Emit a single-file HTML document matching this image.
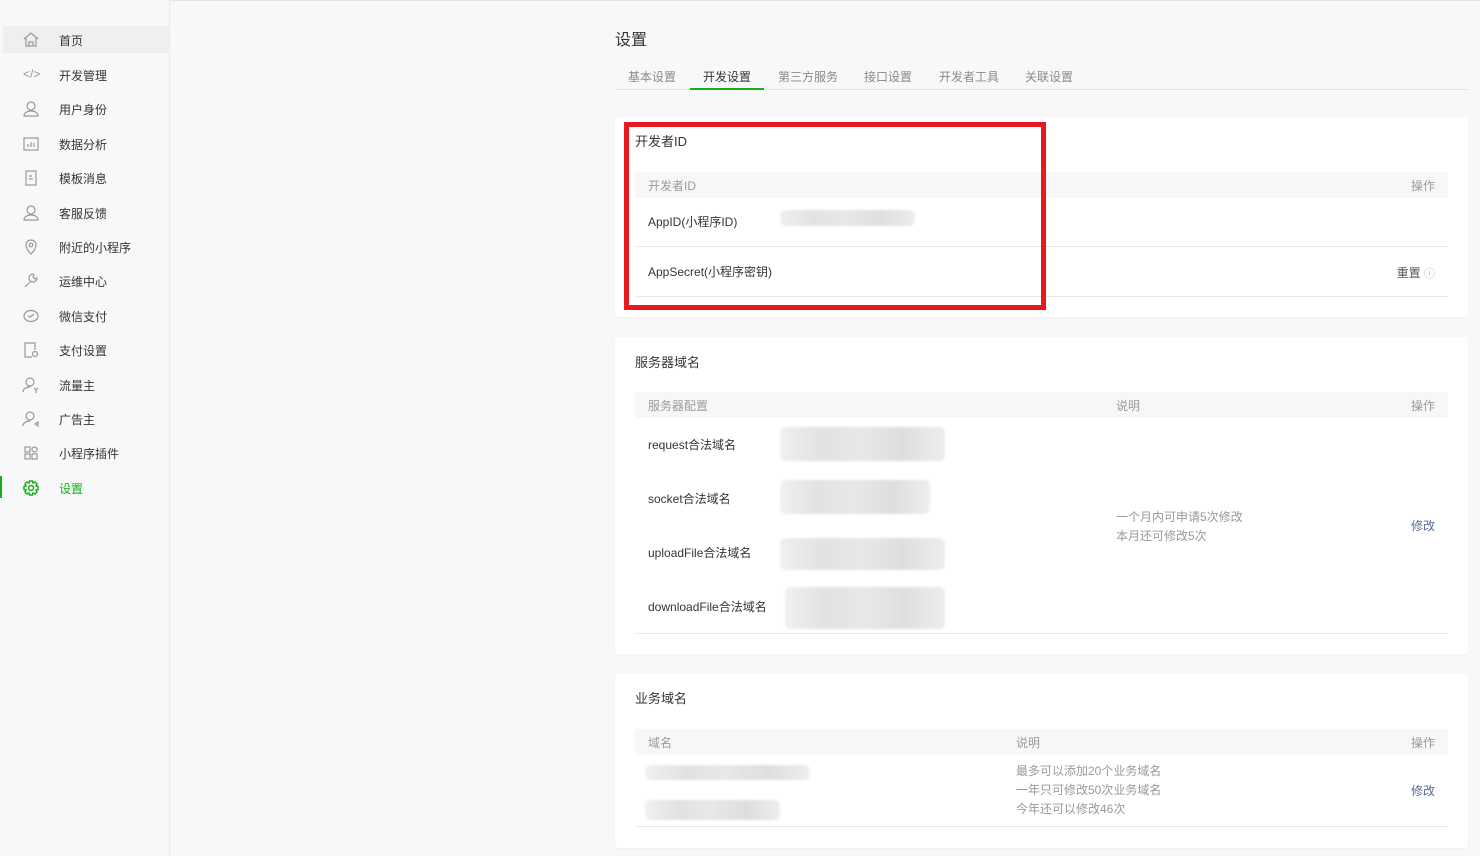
<!DOCTYPE html>
<html><head><meta charset="utf-8"><style>
*{margin:0;padding:0;box-sizing:border-box}
body{width:1480px;height:856px;background:#f7f8fa;font-family:"Liberation Sans","Noto Sans CJK SC",sans-serif;position:relative;overflow:hidden;color:#353535}
.a{position:absolute}
.side{left:0;top:0;width:170px;height:856px;background:#f7f8fa;border-right:1px solid #eaeaea}
.sel{left:3px;top:26px;width:166px;height:27px;background:#eeeff1}
.mi{left:59px;font-size:12px;color:#353535;margin-top:-1px}
.card{background:#fff;left:615px;width:853px;border-radius:3px;box-shadow:0 1px 2px rgba(0,0,0,.04)}
.th{background:#f6f7f9;height:26px;left:20px;right:20px;font-size:12px;color:#9a9a9a}
.th span{margin-top:-1px}
.t{font-size:13px;color:#353535;margin-top:-2px}
.g{font-size:12px;color:#9a9a9a;margin-top:-1px}
.line{height:1px;background:#e7e7eb;left:20px;right:20px}
.blur{background:linear-gradient(90deg,#f0f0f0,#e2e2e2,#e8e8e8,#dedede,#eee);border-radius:6px;filter:blur(1px)}
.lnk{font-size:12px;color:#576b95;margin-top:-1px}
</style></head><body>
<div class="a" style="left:0;top:0;width:1480px;height:1px;background:#e5e5e5"></div>
<div class="a side"></div>
<div class="a sel"></div>
<div class="a" style="left:0;top:476px;width:2px;height:22px;background:#1aad19"></div>
<svg class="a" style="left:22px;top:31px" width="18" height="18" viewBox="0 0 18 18" fill="none" stroke="#999" stroke-width="1.2"><path d="M2 8L9 2l7 6M4 7v8h10V7M7 15v-4h4v4"/></svg>
<div class="a mi" style="top:33px">首页</div>
<div class="a" style="left:23px;top:67px;font-size:12px;color:#999">&lt;/&gt;</div>
<div class="a mi" style="top:68px">开发管理</div>
<svg class="a" style="left:22px;top:100px" width="18" height="18" viewBox="0 0 18 18" fill="none" stroke="#999" stroke-width="1.2"><circle cx="9" cy="6" r="4"/><path d="M2 16c0-3 3-5 7-5s7 2 7 5z"/></svg>
<div class="a mi" style="top:102px">用户身份</div>
<svg class="a" style="left:22px;top:135px" width="18" height="18" viewBox="0 0 18 18" fill="none" stroke="#999" stroke-width="1.2"><rect x="2" y="3" width="14" height="12"/><path d="M6 12V9M9 12V7M12 12V8"/></svg>
<div class="a mi" style="top:137px">数据分析</div>
<svg class="a" style="left:22px;top:169px" width="18" height="18" viewBox="0 0 18 18" fill="none" stroke="#999" stroke-width="1.2"><rect x="4" y="2" width="10" height="14"/><path d="M7 7h3M7 10h4"/></svg>
<div class="a mi" style="top:171px">模板消息</div>
<svg class="a" style="left:22px;top:204px" width="18" height="18" viewBox="0 0 18 18" fill="none" stroke="#999" stroke-width="1.2"><circle cx="9" cy="6" r="4"/><path d="M2 16c0-3 3-5 7-5s7 2 7 5z"/></svg>
<div class="a mi" style="top:206px">客服反馈</div>
<svg class="a" style="left:22px;top:238px" width="18" height="18" viewBox="0 0 18 18" fill="none" stroke="#999" stroke-width="1.2"><path d="M9 16C5 12 4 9 4 7a5 5 0 0110 0c0 2-1 5-5 9z"/><circle cx="9" cy="7" r="1.8"/></svg>
<div class="a mi" style="top:240px">附近的小程序</div>
<svg class="a" style="left:22px;top:272px" width="18" height="18" viewBox="0 0 18 18" fill="none" stroke="#999" stroke-width="1.2"><path d="M3 15l6-6M11 2a4 4 0 104 4l-2 1-2-2 1-2z"/></svg>
<div class="a mi" style="top:274px">运维中心</div>
<svg class="a" style="left:22px;top:307px" width="18" height="18" viewBox="0 0 18 18" fill="none" stroke="#999" stroke-width="1.2"><ellipse cx="9" cy="9" rx="7" ry="5.5"/><path d="M6 9l2 1 4-3"/></svg>
<div class="a mi" style="top:309px">微信支付</div>
<svg class="a" style="left:22px;top:341px" width="18" height="18" viewBox="0 0 18 18" fill="none" stroke="#999" stroke-width="1.2"><path d="M10 16H3V2h10v7"/><circle cx="13" cy="13" r="2.5"/></svg>
<div class="a mi" style="top:343px">支付设置</div>
<svg class="a" style="left:22px;top:376px" width="18" height="18" viewBox="0 0 18 18" fill="none" stroke="#999" stroke-width="1.2"><circle cx="8" cy="6" r="4"/><path d="M1 16c0-3 3-5 7-5M12 12l2 2 2-2M14 14v3"/></svg>
<div class="a mi" style="top:378px">流量主</div>
<svg class="a" style="left:22px;top:410px" width="18" height="18" viewBox="0 0 18 18" fill="none" stroke="#999" stroke-width="1.2"><circle cx="8" cy="6" r="4"/><path d="M1 16c0-3 3-5 7-5M16 12l-3 2 3 2z"/></svg>
<div class="a mi" style="top:412px">广告主</div>
<svg class="a" style="left:22px;top:444px" width="18" height="18" viewBox="0 0 18 18" fill="none" stroke="#999" stroke-width="1.2"><rect x="3" y="3" width="5" height="5"/><rect x="3" y="10" width="5" height="5"/><rect x="10" y="10" width="5" height="5"/><circle cx="12.5" cy="5.5" r="2.5"/></svg>
<div class="a mi" style="top:446px">小程序插件</div>
<svg class="a" style="left:22px;top:479px" width="18" height="18" viewBox="0 0 18 18" fill="none" stroke="#1aad19" stroke-width="1.5"><path d="M7.5 2h3l.5 2 2-1 2 2-1 2 2 .5v3l-2 .5 1 2-2 2-2-1-.5 2h-3L7 14l-2 1-2-2 1-2-2-.5v-3L4 7 3 5l2-2 2 1z"/><circle cx="9" cy="9" r="2.5"/></svg>
<div class="a mi" style="top:481px;color:#1aad19">设置</div>

<div class="a" style="left:615px;top:26px;font-size:16px">设置</div>
<div class="a" style="left:615px;top:89px;width:853px;height:1px;background:#e1e1e1"></div>
<div class="a" style="left:690px;top:88px;width:74px;height:2px;background:#1aad19"></div>
<div class="a g" style="left:628px;top:69px;color:#8a8a8a">基本设置</div>
<div class="a g" style="left:703px;top:69px;color:#353535">开发设置</div>
<div class="a g" style="left:778px;top:69px;color:#8a8a8a">第三方服务</div>
<div class="a g" style="left:864px;top:69px;color:#8a8a8a">接口设置</div>
<div class="a g" style="left:939px;top:69px;color:#8a8a8a">开发者工具</div>
<div class="a g" style="left:1025px;top:69px;color:#8a8a8a">关联设置</div>

<div class="a card" style="top:117px;height:200px">
 <div class="a t" style="left:20px;top:16px">开发者ID</div>
 <div class="a th" style="top:55px"><span class="a" style="left:13px;top:6px">开发者ID</span><span class="a" style="right:13px;top:6px">操作</span></div>
 <div class="a t" style="left:33px;top:98px;font-size:12px">AppID(小程序ID)</div>
 <div class="a blur" style="left:165px;top:93px;width:135px;height:16px"></div>
 <div class="a line" style="top:129px"></div>
 <div class="a t" style="left:33px;top:148px;font-size:12px">AppSecret(小程序密钥)</div>
 <div class="a g" style="right:33px;top:148px;color:#555">重置 <span style="color:#bbb;font-size:11px">ⓘ</span></div>
 <div class="a line" style="top:179px"></div>
</div>
<div class="a" style="left:624px;top:122px;width:422px;height:188px;border:5px solid #e8191f"></div>

<div class="a card" style="top:337px;height:317px">
 <div class="a t" style="left:20px;top:17px">服务器域名</div>
 <div class="a th" style="top:55px"><span class="a" style="left:13px;top:6px">服务器配置</span><span class="a" style="left:481px;top:6px">说明</span><span class="a" style="right:13px;top:6px">操作</span></div>
 <div class="a t" style="left:33px;top:101px;font-size:12px">request合法域名</div>
 <div class="a blur" style="left:165px;top:90px;width:165px;height:34px"></div>
 <div class="a t" style="left:33px;top:155px;font-size:12px">socket合法域名</div>
 <div class="a blur" style="left:165px;top:143px;width:150px;height:34px"></div>
 <div class="a t" style="left:33px;top:209px;font-size:12px">uploadFile合法域名</div>
 <div class="a blur" style="left:165px;top:201px;width:165px;height:32px"></div>
 <div class="a t" style="left:33px;top:263px;font-size:12px">downloadFile合法域名</div>
 <div class="a blur" style="left:170px;top:250px;width:160px;height:42px"></div>
 <div class="a g" style="left:501px;top:172px;line-height:19px;color:#999">一个月内可申请5次修改<br>本月还可修改5次</div>
 <div class="a lnk" style="right:33px;top:181px">修改</div>
 <div class="a line" style="top:296px"></div>
</div>

<div class="a card" style="top:674px;height:174px">
 <div class="a t" style="left:20px;top:16px">业务域名</div>
 <div class="a th" style="top:55px"><span class="a" style="left:13px;top:6px">域名</span><span class="a" style="left:381px;top:6px">说明</span><span class="a" style="right:13px;top:6px">操作</span></div>
 <div class="a blur" style="left:30px;top:91px;width:165px;height:15px"></div>
 <div class="a blur" style="left:30px;top:126px;width:135px;height:20px"></div>
 <div class="a g" style="left:401px;top:89px;line-height:19px;color:#999">最多可以添加20个业务域名<br>一年只可修改50次业务域名<br>今年还可以修改46次</div>
 <div class="a lnk" style="right:33px;top:109px">修改</div>
 <div class="a line" style="top:152px"></div>
</div>
</body></html>
